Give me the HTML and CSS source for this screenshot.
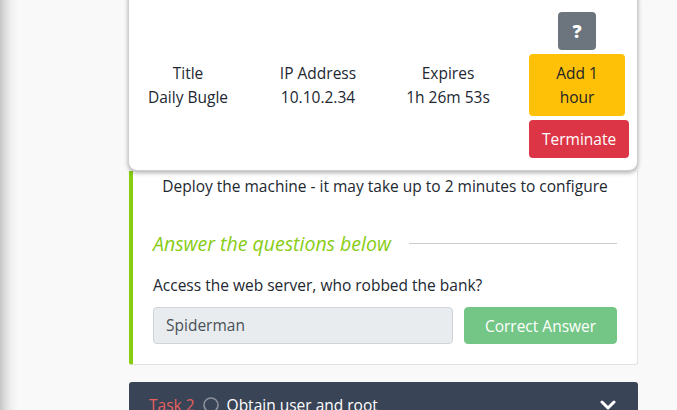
FILE: index.html
```html
<!DOCTYPE html>
<html lang="en">
<head>
<meta charset="utf-8">
<title>Task</title>
<link rel="stylesheet" href="styles.css">
</head>
<body>
<div class="page">
  <div class="machine">
    <div class="info">
      <div class="label">Title</div>
      <div class="value">Daily Bugle</div>
    </div>
    <div class="info">
      <div class="label">IP Address</div>
      <div class="value">10.10.2.34</div>
    </div>
    <div class="info">
      <div class="label">Expires</div>
      <div class="value">1h 26m 53s</div>
    </div>
    <div class="actions">
      <button class="btn btn-help">?</button>
      <button class="btn btn-add">Add 1<br>hour</button>
      <button class="btn btn-terminate">Terminate</button>
    </div>
  </div>

  <div class="task">
    <p class="deploy">Deploy the machine - it may take up to 2 minutes to configure</p>
    <div class="qhead">
      <span class="qtitle">Answer the questions below</span>
      <span class="qline"></span>
    </div>
    <p class="question">Access the web server, who robbed the bank?</p>
    <div class="answer-row">
      <div class="answer-input">Spiderman</div>
      <button class="btn btn-correct">Correct Answer</button>
    </div>
  </div>

  <div class="task-head">
    <span class="task-num">Task 2</span>
    <svg class="task-circle" width="16" height="16" viewBox="0 0 16 16"><circle cx="8" cy="8" r="7" fill="none" stroke="#8a919c" stroke-width="1.6"/></svg>
    <span class="task-name">Obtain user and root</span>
    <svg class="chev" width="16" height="12" viewBox="0 0 16 12"><polyline points="2,3 8,9 14,3" fill="none" stroke="#ffffff" stroke-width="3" stroke-linecap="round" stroke-linejoin="round"/></svg>
  </div>
</div>
</body>
</html>
```

FILE: styles.css
```css
* { box-sizing: border-box; }

html, body { height: 100%; }

body {
  margin: 0;
  overflow: hidden;
  font-family: "Open Sans", "Noto Sans", sans-serif;
  font-size: 15.5px;
  color: #222831;
  background: linear-gradient(to right, #c6c6c6 0px, #dcdcdc 5px, #f0f0f0 11px, #f9f9f9 18px, #f9f9f9 100%);
}

.page {
  margin-left: 128px;
  width: 510px;
}

.machine {
  margin-top: -10px;
  padding: 21px 0 12px;
  background: #fff;
  border: 1px solid #cfcfcf;
  border-radius: 9px;
  box-shadow: 0 2px 4px rgba(0, 0, 0, 0.3);
  display: grid;
  grid-template-columns: repeat(4, 130px);
  justify-content: center;
  align-items: center;
  position: relative;
  z-index: 2;
}

.info {
  text-align: center;
  line-height: 24px;
}

.label, .value { white-space: nowrap; }

.actions {
  display: flex;
  flex-direction: column;
  align-items: flex-start;
  padding-left: 16px;
  gap: 4px;
}

.btn {
  font-family: inherit;
  font-size: 15.5px;
  line-height: 24px;
  border: 1px solid transparent;
  border-radius: 4px;
  padding: 6px 12px;
  cursor: pointer;
}

.btn-help {
  width: 38px;
  height: 38px;
  margin-left: 29px;
  padding: 0;
  background: #6c757d;
  color: #fff;
  font-weight: 800;
  font-size: 18px;
}

.btn-add {
  width: 96px;
  height: 62px;
  background: #ffc107;
  color: #212529;
}

.btn-terminate {
  width: 100px;
  height: 38px;
  background: #dc3545;
  color: #fff;
}

.task {
  margin-left: 1px;
  width: 509px;
  background: #fff;
  border: 1px solid #e2e2e2;
  border-left: 4px solid #88cc14;
  border-top: none;
  border-radius: 0 0 3px 3px;
  padding: 3px 20px 20px;
  position: relative;
  z-index: 1;
}

.deploy {
  margin: 0;
  text-align: center;
  line-height: 24px;
  white-space: nowrap;
}

.qhead {
  margin-top: 34px;
  display: flex;
  align-items: center;
  height: 23px;
}

.qtitle {
  font-style: italic;
  font-size: 19.5px;
  color: #88cc14;
  white-space: nowrap;
}

.qline {
  flex: 1;
  height: 1px;
  background: #cccccc;
  margin-left: 18px;
}

.question {
  margin: 18px 0 0;
  line-height: 24px;
}

.answer-row {
  margin-top: 10px;
  display: grid;
  grid-template-columns: 300px 153px;
  column-gap: 11px;
}

.answer-input {
  height: 37px;
  background: #e9ecef;
  border: 1px solid #ced4da;
  border-radius: 4px;
  padding: 0 12px;
  line-height: 35px;
  color: #495057;
}

.btn-correct {
  height: 37px;
  padding: 0 12px;
  background: #73c686;
  border-color: #73c686;
  color: #fff;
}

.task-head {
  margin-top: 17px;
  margin-left: 1px;
  width: 509px;
  background: #394457;
  padding: 11px 20px 14px;
  display: flex;
  align-items: center;
  line-height: 24px;
  border-radius: 3px 3px 0 0;
}

.task-num {
  color: #e8605d;
  margin-right: 8px;
}

.task-circle {
  margin-right: 8px;
}

.task-name {
  color: #fff;
  flex: 1;
}

.chev {
  margin-right: 2px;
}
```
